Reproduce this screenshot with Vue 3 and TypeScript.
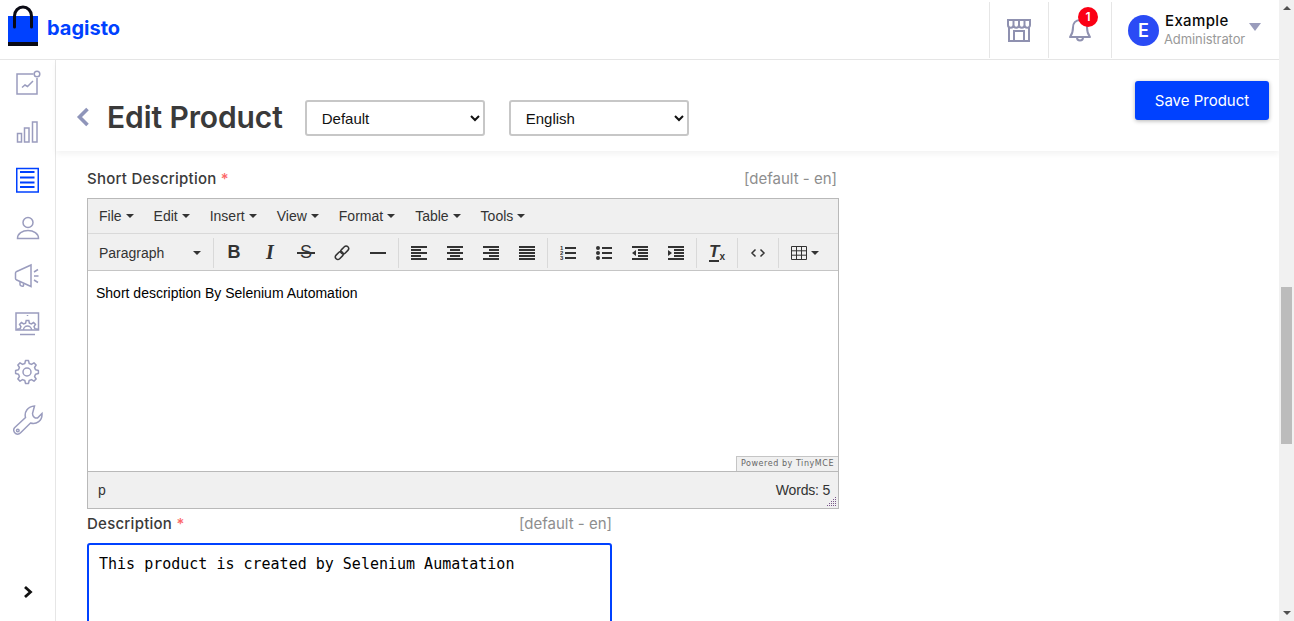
<script setup lang="ts">
// builds a toothed outline for the gear icons
function gearPath(cx: number, cy: number, outer: number, inner: number, teeth: number): string {
  const parts: string[] = []
  const step = (Math.PI * 2) / teeth
  for (let i = 0; i < teeth; i++) {
    const a = i * step - Math.PI / 2
    const pts: [number, number][] = [
      [inner, a - step * 0.32],
      [outer, a - step * 0.17],
      [outer, a + step * 0.17],
      [inner, a + step * 0.32],
    ]
    for (const [r, t] of pts) {
      const x = (cx + Math.cos(t) * r).toFixed(2)
      const y = (cy + Math.sin(t) * r).toFixed(2)
      parts.push(`${parts.length ? 'L' : 'M'}${x} ${y}`)
    }
  }
  return parts.join(' ') + ' Z'
}

const settingsGear = gearPath(14, 15, 11.5, 8.8, 8)
const monitorGear = gearPath(14.5, 21.5, 10, 7.6, 8)

const menus = ['File', 'Edit', 'Insert', 'View', 'Format', 'Table', 'Tools']

function rows(items: [number, number][]): string {
  return items.map(([x, w], i) => `M${x} ${1 + i * 3}h${w}v2h-${w}z`).join('')
}

const fillIcons: Record<string, string> = {
  alignleft: rows([[0, 16], [0, 10], [0, 16], [0, 10], [0, 16]]),
  aligncenter: rows([[0, 16], [3, 10], [0, 16], [3, 10], [0, 16]]),
  alignright: rows([[0, 16], [6, 10], [0, 16], [6, 10], [0, 16]]),
  alignjustify: rows([[0, 16], [0, 16], [0, 16], [0, 16], [0, 16]]),
  outdent: rows([[0, 16], [6, 10], [6, 10], [6, 10], [0, 16]]) + 'M4 5v6L0 8z',
  indent: rows([[0, 16], [6, 10], [6, 10], [6, 10], [0, 16]]) + 'M0 5v6l4-3z',
}

const groups = [
  ['bold', 'italic', 'strike', 'link', 'hr'],
  ['alignleft', 'aligncenter', 'alignright', 'alignjustify'],
  ['numlist', 'bullist', 'outdent', 'indent'],
  ['clear'],
  ['code'],
]

const description = 'This product is created by Selenium Aumatation'
</script>

<template>
  <div class="app">
    <div class="page">
      <header class="navbar">
        <div class="brand">
          <svg class="logo" width="30" height="41" viewBox="0 0 30 41">
            <rect x="0" y="11" width="30" height="30" fill="#0041ff" />
            <rect x="0" y="37" width="30" height="4" fill="#0a0a14" />
            <path d="M6.500 22V11a8.500 9 0 0 1 17 0V22" fill="none" stroke="#0a0a14" stroke-width="3" stroke-linecap="round" />
          </svg>
          <span class="brand-name">bagisto</span>
        </div>
        <div class="nav-right">
          <div class="nav-cell shop">
            <svg width="26" height="26" viewBox="0 0 26 26" fill="none" stroke="#8f91b0" stroke-width="2">
              <path d="M3 10v14h20V10" />
              <path d="M2 3h22v5a2.700 2.700 0 0 1-5.500 0 2.700 2.700 0 0 1-5.500 0 2.700 2.700 0 0 1-5.500 0A2.700 2.700 0 0 1 2 8z" />
              <path d="M7.500 3v5M13 3v5M18.500 3v5" />
              <path d="M8 24v-10h10v10" />
            </svg>
          </div>
          <div class="nav-cell bell">
            <svg width="26" height="28" viewBox="0 0 26 28" fill="none" stroke="#8f91b0" stroke-width="2" stroke-linejoin="round">
              <path d="M13 4c-4.500 0-7 3.500-7 7.500 0 5-1 7-3 9.500h20c-2-2.500-3-4.500-3-9.500C20 7.500 17.500 4 13 4z" />
              <path d="M10 21.500a3 3 0 0 0 6 0" />
            </svg>
            <span class="badge">1</span>
          </div>
          <div class="nav-cell profile">
            <span class="avatar">E</span>
            <div class="who">
              <span class="who-name">Example</span>
              <span class="who-role">Administrator</span>
            </div>
            <i class="who-caret"></i>
          </div>
        </div>
      </header>

      <div class="body">
        <nav class="sidebar">
          <svg class="side-icon" viewBox="0 0 30 30">
            <path d="M20.500 5H4v20h20V9" />
            <circle cx="24" cy="5" r="2.800" />
            <path d="M9 18.500l3-2.500 2.500 1.500L20 12" />
          </svg>
          <svg class="side-icon" viewBox="0 0 30 30">
            <rect x="4.500" y="16.500" width="4" height="8.500" />
            <rect x="11.500" y="11" width="4.500" height="14" />
            <rect x="19.500" y="5" width="4.500" height="20" />
          </svg>
          <svg class="side-icon active" viewBox="0 0 30 30">
            <rect x="3.750" y="3.500" width="21.500" height="23.500" />
            <path d="M7 7h14.500M7 12.500h14.500M7 17.500h14.500M7 22h14.500" stroke-width="2" />
          </svg>
          <svg class="side-icon" viewBox="0 0 30 30">
            <circle cx="15" cy="9.500" r="5" />
            <path d="M4.500 25.500c0-5 5-8 10.500-8s10.500 3 10.500 8z" />
          </svg>
          <svg class="side-icon" viewBox="0 0 30 30">
            <path d="M2.500 12c0-.8.500-1.200 1.200-1.500L18 4v21.500L3.700 19c-.7-.3-1.200-.7-1.200-1.500z" />
            <path d="M7 21v2.500c0 1.500 3.500 2.500 3.500 1V23" />
            <path d="M21 11l4-2.500M21 15h4.500M21 19l4 2.500" />
          </svg>
          <svg class="side-icon" viewBox="0 0 30 30">
            <defs>
              <clipPath id="screen-clip"><rect x="3" y="4" width="22.500" height="17" /></clipPath>
            </defs>
            <rect x="3" y="4" width="22.500" height="17" />
            <path d="M7 25.500h15" />
            <path :d="monitorGear" clip-path="url(#screen-clip)" />
            <path d="M10.500 21a4 4 0 0 1 8 0" />
            <path d="M14.500 6v1" />
          </svg>
          <svg class="side-icon" viewBox="0 0 30 30">
            <path :d="settingsGear" stroke-linejoin="round" />
            <circle cx="14" cy="15" r="4" />
          </svg>
          <svg class="side-icon" viewBox="0 0 30 30">
            <path d="M21.500 1C15 1.500 11 6.500 12.500 12.500L1.800 22.500c-2 2-1 5 .8 6 2 1.200 3.700.6 5-.7L17.500 18C23.500 20 29.500 15.500 29 8.500L24.500 13c-2.500.5-5-1.500-5-4.500z" />
            <circle cx="4.800" cy="25.500" r="1.300" />
          </svg>
          <svg class="side-toggle" width="12" height="14" viewBox="0 0 12 14">
            <path d="M3 2l5.500 5L3 12" fill="none" stroke="#111" stroke-width="2.800" />
          </svg>
        </nav>

        <main class="main">
          <section class="page-head">
            <div class="head-left">
              <svg class="back" width="14" height="20" viewBox="0 0 14 20">
                <path d="M11.500 2L3.500 10l8 8" fill="none" stroke="#8f95ba" stroke-width="3.600" />
              </svg>
              <h1 class="title">Edit Product</h1>
              <select class="picker">
                <option>Default</option>
              </select>
              <select class="picker">
                <option>English</option>
              </select>
            </div>
            <button class="save">Save Product</button>
          </section>

          <section class="content">
            <div class="label-row wide">
              <label class="field-label">Short Description <em>*</em></label>
              <span class="locale">[default - en]</span>
            </div>
            <div class="editor">
              <div class="menubar">
                <span v-for="menu in menus" :key="menu" class="menu-item">{{ menu }}<i class="caret"></i></span>
              </div>
              <div class="toolbar">
                <div class="format-select">Paragraph<i class="caret"></i></div>
                <div v-for="(group, g) in groups" :key="g" class="tool-group">
                  <span v-for="tool in group" :key="tool" class="tool">
                    <b v-if="tool === 'bold'" class="g-bold">B</b>
                    <b v-else-if="tool === 'italic'" class="g-italic">I</b>
                    <span v-else-if="tool === 'strike'" class="g-strike">S</span>
                    <span v-else-if="tool === 'clear'" class="g-clear"><span class="g-t">T</span><small>x</small></span>
                    <svg v-else-if="tool === 'link'" width="16" height="16" viewBox="0 0 16 16" fill="none" stroke="#333" stroke-width="1.500">
                      <rect x="8.200" y="0.500" width="5" height="9" rx="2.500" transform="rotate(45 10.700 5)" />
                      <rect x="2.800" y="6" width="5" height="9" rx="2.500" transform="rotate(45 5.300 10.500)" />
                    </svg>
                    <svg v-else-if="tool === 'hr'" width="16" height="16" viewBox="0 0 16 16">
                      <rect x="0" y="7" width="16" height="2" fill="#333" />
                    </svg>
                    <svg v-else-if="tool === 'numlist'" width="16" height="16" viewBox="0 0 16 16" fill="#333">
                      <text x="0" y="5" class="mini">1</text>
                      <text x="0" y="10" class="mini">2</text>
                      <text x="0" y="15" class="mini">3</text>
                      <path d="M5 2h11v2H5zM5 7h11v2H5zM5 12h11v2H5z" />
                    </svg>
                    <svg v-else-if="tool === 'bullist'" width="16" height="16" viewBox="0 0 16 16" fill="#333">
                      <circle cx="2" cy="3" r="2" />
                      <circle cx="2" cy="8" r="2" />
                      <circle cx="2" cy="13" r="2" />
                      <path d="M6 2h10v2H6zM6 7h10v2H6zM6 12h10v2H6z" />
                    </svg>
                    <svg v-else-if="tool === 'code'" width="16" height="16" viewBox="0 0 16 16" fill="none" stroke="#333" stroke-width="1.500">
                      <path d="M5.500 4.500L2 8l3.500 3.500M10.500 4.500L14 8l-3.500 3.500" />
                    </svg>
                    <svg v-else width="16" height="16" viewBox="0 0 16 16" fill="#333">
                      <path :d="fillIcons[tool]" />
                    </svg>
                  </span>
                </div>
                <span class="table-tool">
                  <svg width="16" height="14" viewBox="0 0 16 14" fill="none" stroke="#333">
                    <path d="M.5.500h15v13H.500zM.5 4.800h15M.5 9.200h15M5.500.500v13M10.500.500v13" />
                  </svg>
                  <i class="caret"></i>
                </span>
              </div>
              <div class="edit-area">
                <p>Short description By Selenium Automation</p>
                <span class="powered">Powered by TinyMCE</span>
              </div>
              <div class="statusbar">
                <span>p</span>
                <span class="words">Words: 5</span>
                <svg class="grip" width="10" height="10" viewBox="0 0 10 10" fill="#7a5a8c">
                  <rect x="8" y="0" width="1" height="1" />
                  <rect x="6" y="2" width="1" height="1" /><rect x="8" y="2" width="1" height="1" />
                  <rect x="4" y="4" width="1" height="1" /><rect x="6" y="4" width="1" height="1" /><rect x="8" y="4" width="1" height="1" />
                  <rect x="2" y="6" width="1" height="1" /><rect x="4" y="6" width="1" height="1" /><rect x="6" y="6" width="1" height="1" /><rect x="8" y="6" width="1" height="1" />
                  <rect x="0" y="8" width="1" height="1" /><rect x="2" y="8" width="1" height="1" /><rect x="4" y="8" width="1" height="1" /><rect x="6" y="8" width="1" height="1" /><rect x="8" y="8" width="1" height="1" />
                </svg>
              </div>
            </div>

            <div class="label-row narrow">
              <label class="field-label">Description <em>*</em></label>
              <span class="locale">[default - en]</span>
            </div>
            <textarea class="desc" readonly :value="description"></textarea>
          </section>
        </main>
      </div>
    </div>

    <aside class="scrollbar">
      <i class="arrow up"></i>
      <div class="thumb"></div>
      <i class="arrow down"></i>
    </aside>
  </div>
</template>

<style>
html, body {
  margin: 0;
  overflow: hidden;
}
</style>

<style scoped>
.app {
  display: flex;
  height: 621px;
  overflow: hidden;
  background: #fff;
  font-family: Inter, "Open Sans", sans-serif;
}
.page {
  flex: 1;
  min-width: 0;
  display: flex;
  flex-direction: column;
}

/* top bar */
.navbar {
  height: 60px;
  box-sizing: border-box;
  border-bottom: 1px solid #e6e6e6;
  display: flex;
  justify-content: space-between;
}
.brand {
  display: flex;
  align-items: flex-start;
  padding: 5px 0 0 8px;
}
.brand-name {
  margin: 11px 0 0 9px;
  font-size: 20px;
  line-height: 24px;
  font-weight: 700;
  color: #0041ff;
}
.nav-right {
  display: flex;
}
.nav-cell {
  position: relative;
  height: 56px;
  margin-top: 2px;
  border-left: 1px solid #e6e6e6;
  box-sizing: border-box;
  display: flex;
  align-items: center;
}
.shop {
  width: 59px;
  padding-left: 16px;
}
.bell {
  width: 63px;
  padding-left: 18px;
}
.badge {
  position: absolute;
  top: 5px;
  left: 29px;
  width: 20px;
  height: 20px;
  border-radius: 50%;
  background: #fb0015;
  color: #fff;
  font-size: 12px;
  font-weight: 600;
  line-height: 20px;
  text-align: center;
}
.profile {
  width: 168px;
  padding-left: 16px;
}
.avatar {
  width: 31px;
  height: 31px;
  border-radius: 50%;
  background: #2a4bf5;
  color: #fff;
  font-size: 18px;
  font-weight: 600;
  line-height: 31px;
  text-align: center;
}
.who {
  margin-left: 5px;
  display: flex;
  flex-direction: column;
}
.who-name {
  margin-left: 1px;
  font-size: 15px;
  line-height: 18px;
  font-weight: 500;
  letter-spacing: 0.350px;
  color: #0a0a0a;
}
.who-role {
  font-size: 13px;
  line-height: 18px;
  letter-spacing: -0.100px;
  color: #999;
}
.who-caret {
  margin: -6px 0 0 4px;
  border-left: 6.500px solid transparent;
  border-right: 6.500px solid transparent;
  border-top: 8px solid #9a9cbc;
}

/* left rail */
.body {
  flex: 1;
  min-height: 0;
  display: flex;
}
.sidebar {
  width: 56px;
  flex: none;
  box-sizing: border-box;
  border-right: 1px solid #e6e6e6;
  padding: 9px 0 0 13px;
  display: flex;
  flex-direction: column;
  gap: 18px;
}
.side-icon {
  width: 30px;
  height: 30px;
  flex: none;
  fill: none;
  stroke: #9a9cbe;
  stroke-width: 1.500;
}
.side-icon.active {
  stroke: #0041ff;
}
.side-toggle {
  margin: auto 0 22px 9px;
}

/* page head */
.main {
  flex: 1;
  min-width: 0;
}
.page-head {
  height: 91px;
  box-sizing: border-box;
  padding: 0 10px 0 20px;
  display: flex;
  justify-content: space-between;
  box-shadow: 0 3px 6px rgba(0, 0, 0, 0.05);
}
.head-left {
  display: flex;
  align-items: center;
  margin-top: 16px;
  height: 82px;
}
.back {
  margin-right: 17px;
}
.title {
  margin: 0 22px 0 0;
  font-size: 30px;
  font-weight: 600;
  letter-spacing: -0.100px;
  color: #3a3a3a;
  white-space: nowrap;
}
.picker {
  width: 180px;
  height: 36px;
  margin: 2px 24px 0 0;
  box-sizing: border-box;
  border: 2px solid #c7c7c7;
  border-radius: 3px;
  padding-left: 11px;
  background: #fff;
  color: #111;
  font-family: "Liberation Sans", sans-serif;
  font-size: 15px;
}
.save {
  margin-top: 21px;
  width: 134px;
  height: 39px;
  border: 0;
  border-radius: 3px;
  background: #0041ff;
  color: #fff;
  font-family: inherit;
  font-size: 15px;
  box-shadow: 0 1px 4px rgba(0, 0, 0, 0.3);
}

/* form */
.content {
  padding: 18px 0 0 31px;
}
.label-row {
  display: flex;
  justify-content: space-between;
  height: 20px;
  line-height: 20px;
}
.label-row.wide {
  width: 750px;
  margin-bottom: 9px;
}
.label-row.narrow {
  width: 525px;
  margin: 5px 0 9px;
}
.field-label {
  font-size: 15px;
  font-weight: 500;
  letter-spacing: 0.250px;
  color: #3a3a3a;
}
.field-label em {
  font-style: normal;
  color: #fc6868;
}
.locale {
  font-size: 15px;
  color: #8e8e8e;
}

/* rich text editor */
.editor {
  width: 752px;
  box-sizing: border-box;
  border: 1px solid #b9b9b9;
  font-family: "Liberation Sans", Arial, sans-serif;
  font-size: 14px;
  color: #333;
}
.menubar {
  height: 35px;
  box-sizing: border-box;
  background: #f0f0f0;
  border-bottom: 1px solid #d9d9d9;
  padding-left: 1px;
  display: flex;
  align-items: center;
}
.menu-item {
  padding: 0 10px;
  display: flex;
  align-items: center;
}
.caret {
  display: inline-block;
  margin-left: 4px;
  border-left: 4px solid transparent;
  border-right: 4px solid transparent;
  border-top: 4px solid #333;
}
.toolbar {
  height: 37px;
  box-sizing: border-box;
  padding-top: 1px;
  background: #f0f0f0;
  border-bottom: 1px solid #c5c5c5;
  display: flex;
  align-items: center;
}
.format-select {
  width: 126px;
  height: 30px;
  box-sizing: border-box;
  flex: none;
  padding: 0 12px 0 11px;
  margin-right: 2px;
  border-right: 1px solid #d9d9d9;
  display: flex;
  align-items: center;
  justify-content: space-between;
}
.tool-group {
  display: flex;
  height: 30px;
  padding-right: 2px;
  margin-right: 2px;
  border-right: 1px solid #d9d9d9;
}
.tool {
  width: 36px;
  display: flex;
  align-items: center;
  justify-content: center;
}
.g-bold {
  font-size: 18px;
  color: #333;
}
.g-italic {
  font-family: "Liberation Serif", serif;
  font-style: italic;
  font-size: 20px;
}
.g-strike {
  position: relative;
  font-size: 18px;
  font-weight: 500;
}
.g-strike::after {
  content: "";
  position: absolute;
  left: -3px;
  right: -3px;
  top: 10px;
  height: 1.500px;
  background: #333;
}
.g-clear {
  display: flex;
  align-items: flex-end;
  height: 18px;
}
.g-t {
  display: block;
  height: 16px;
  line-height: 15px;
  border-bottom: 2px solid #333;
  font-style: italic;
  font-weight: 700;
  font-size: 17px;
}
.g-clear small {
  font-style: normal;
  font-weight: 700;
  font-size: 10px;
  line-height: 10px;
}
.mini {
  font-size: 6px;
  font-family: "Liberation Sans", sans-serif;
  font-weight: 700;
}
.table-tool {
  display: flex;
  align-items: center;
  padding-left: 10px;
}
.edit-area {
  position: relative;
  height: 200px;
  box-sizing: border-box;
  padding: 1px 8px;
  background: #fff;
  color: #000;
}
.edit-area p {
  margin: 13px 0;
  line-height: 16px;
}
.powered {
  position: absolute;
  right: 0;
  bottom: 0;
  height: 15px;
  padding: 0 4px;
  box-sizing: border-box;
  background: #f0f0f0;
  border: 1px solid #c5c5c5;
  border-width: 1px 0 0 1px;
  font-family: "DejaVu Sans", sans-serif;
  font-size: 8px;
  line-height: 14px;
  letter-spacing: 0.550px;
  color: #666;
}
.statusbar {
  position: relative;
  height: 37px;
  box-sizing: border-box;
  border-top: 1px solid #b9b9b9;
  background: #f0f0f0;
  padding: 0 8px 0 10px;
  display: flex;
  justify-content: space-between;
  align-items: center;
}
.words {
  letter-spacing: -0.200px;
}
.grip {
  position: absolute;
  right: 1px;
  bottom: 1px;
}
.desc {
  display: block;
  width: 525px;
  height: 160px;
  box-sizing: border-box;
  border: 2px solid #0041ff;
  border-radius: 3px;
  padding: 10px;
  outline: 0;
  resize: none;
  font-family: "DejaVu Sans Mono", monospace;
  font-size: 15px;
  line-height: 18px;
  color: #000;
}

/* page scrollbar */
.scrollbar {
  width: 15px;
  flex: none;
  box-sizing: border-box;
  background: #f1f1f1;
  padding: 6px 2px;
  display: flex;
  flex-direction: column;
  align-items: center;
}
.arrow {
  border-left: 4px solid transparent;
  border-right: 4px solid transparent;
}
.arrow.up {
  border-bottom: 4px solid #505050;
}
.arrow.down {
  margin-top: auto;
  border-top: 4px solid #505050;
}
.thumb {
  width: 11px;
  height: 157px;
  margin-top: 277px;
  background: #bcbcbc;
}
</style>
